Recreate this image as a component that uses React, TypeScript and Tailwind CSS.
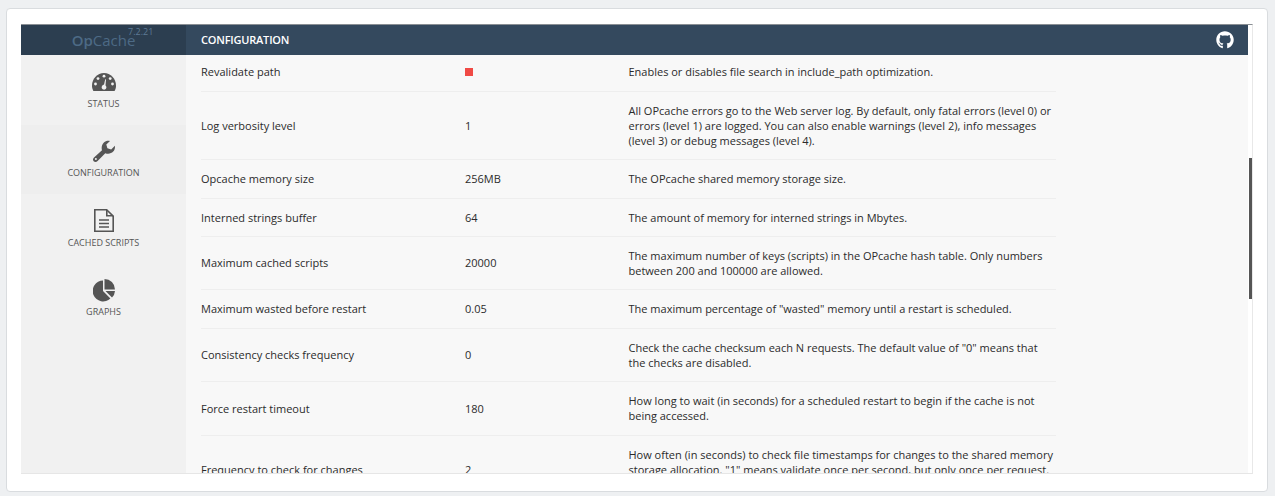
// OpCache GUI, configuration tab, inside a framed scrolling panel.
import type { ReactNode } from 'react';
import { FaGithub } from 'react-icons/fa';

function GaugeIcon() {
  return (
    <svg width="24" height="18" viewBox="0 0 24 18">
      <path
        fill="#555555"
        d="M0 12.5C0 5.6 5.4 0 12 0s12 5.6 12 12.5c0 2-.5 3.9-1.4 5.5H1.4C.5 16.4 0 14.5 0 12.5z"
      />
      <g fill="#f1f1f1">
        <circle cx="12" cy="3.2" r="1.4" />
        <circle cx="6" cy="5.6" r="1.4" />
        <circle cx="18.2" cy="5.6" r="1.4" />
        <circle cx="3.5" cy="11" r="1.4" />
        <circle cx="20.5" cy="11" r="1.4" />
        <path d="M13.2 6.2 14 6.5 13.5 12.4C14.3 13 14.6 14 14.3 15 13.8 16.3 12.5 17 11.2 16.5 10 16 9.3 14.7 9.8 13.4 10.2 12.3 11.2 11.7 12 11.8z" />
      </g>
    </svg>
  );
}

function WrenchIcon() {
  return (
    <svg width="22" height="22" viewBox="0 0 22 22">
      <path
        fill="#555555"
        d="M9 10.2 1 17.4C-.3 18.6-.3 20.2.7 21.2 1.8 22.3 3.4 22.2 4.6 21L12.3 13.2C15.2 14.3 18.2 13.7 20.2 11.6 21.6 10 22.2 8 21.9 5.8L18.2 9.4 14.4 8.3 13.3 4.6 17 1C14.7.4 12.5 1 10.9 2.6 8.8 4.7 8.2 7.6 9 10.2z"
      />
      <circle cx="2.9" cy="19.1" r="1" fill="#eeeeee" />
    </svg>
  );
}

function FileIcon() {
  return (
    <svg width="20" height="23" viewBox="0 0 20 23">
      <path fill="none" stroke="#555555" strokeWidth="1.6" d="M.8.8H12.6L19.2 7.2V22.2H.8z" />
      <path fill="#555555" d="M12 .8h1.6V6H19v1.6H12z" />
      <path stroke="#555555" strokeWidth="1.5" d="M5 11H15M5 14.5H15M5 18H15" />
    </svg>
  );
}

function PieIcon() {
  return (
    <svg width="22" height="23" viewBox="0 0 22 23">
      <path
        fill="#555555"
        d="M10 1.6A10.4 10.4 0 1 0 17.4 19.4L10 12z M11.5 0A10.5 10.5 0 0 1 22 10.5H11.5z M12.5 12H22A10.5 10.5 0 0 1 19 18.6z"
      />
    </svg>
  );
}

interface NavItem {
  label: string;
  icon: ReactNode;
  active?: boolean;
}

const navItems: NavItem[] = [
  { label: 'STATUS', icon: <GaugeIcon /> },
  { label: 'CONFIGURATION', icon: <WrenchIcon />, active: true },
  { label: 'CACHED SCRIPTS', icon: <FileIcon /> },
  { label: 'GRAPHS', icon: <PieIcon /> },
];

interface ConfigRow {
  name: string;
  value: string | null;
  lines: string[];
}

const rows: ConfigRow[] = [
  { name: 'Revalidate path', value: null, lines: ['Enables or disables file search in include_path optimization.'] },
  {
    name: 'Log verbosity level',
    value: '1',
    lines: [
      'All OPcache errors go to the Web server log. By default, only fatal errors (level 0) or',
      'errors (level 1) are logged. You can also enable warnings (level 2), info messages',
      '(level 3) or debug messages (level 4).',
    ],
  },
  { name: 'Opcache memory size', value: '256MB', lines: ['The OPcache shared memory storage size.'] },
  { name: 'Interned strings buffer', value: '64', lines: ['The amount of memory for interned strings in Mbytes.'] },
  {
    name: 'Maximum cached scripts',
    value: '20000',
    lines: [
      'The maximum number of keys (scripts) in the OPcache hash table. Only numbers',
      'between 200 and 100000 are allowed.',
    ],
  },
  {
    name: 'Maximum wasted before restart',
    value: '0.05',
    lines: ['The maximum percentage of "wasted" memory until a restart is scheduled.'],
  },
  {
    name: 'Consistency checks frequency',
    value: '0',
    lines: [
      'Check the cache checksum each N requests. The default value of "0" means that',
      'the checks are disabled.',
    ],
  },
  {
    name: 'Force restart timeout',
    value: '180',
    lines: [
      'How long to wait (in seconds) for a scheduled restart to begin if the cache is not',
      'being accessed.',
    ],
  },
  {
    name: 'Frequency to check for changes',
    value: '2',
    lines: [
      'How often (in seconds) to check file timestamps for changes to the shared memory',
      'storage allocation. "1" means validate once per second, but only once per request.',
      '"0" means always validate.',
    ],
  },
];

function Row({ row }: { row: ConfigRow }) {
  return (
    <div className="flex items-center border-b border-[#eeeeee] py-[11px]">
      <div className="w-[264px] shrink-0">{row.name}</div>
      <div className="w-[163.5px] shrink-0">
        {row.value ?? <div className="size-2 bg-[#f04a45]" />}
      </div>
      <div className="flex-1 whitespace-nowrap">
        {row.lines.map((line) => (
          <div key={line}>{line}</div>
        ))}
      </div>
    </div>
  );
}

export default function App() {
  return (
    <div className="h-[496px] overflow-hidden bg-[#eef0f2] pl-[6px] pr-[7px] pt-[8px] font-['Open_Sans',sans-serif]">
      <div className="h-[484px] rounded border border-[#d9dcdf] bg-white px-[14px] pt-[15px]">
        <div className="flex h-[450px] w-[1232px] flex-col overflow-hidden border-r border-b border-t border-r-[#e8e8e8] border-b-[#e6e6e6] border-t-[#8a8f94] pr-[4px]">
          <div className="flex h-[30px] shrink-0 items-center text-white">
            <div className="relative h-full w-[165px] shrink-0 bg-[#2c3e50] text-center text-[15px] font-semibold leading-[30px] text-[#4d6a85]">
              Op<span className="font-normal">Cache</span>
              <span className="absolute left-[107px] top-[2px] text-[9px] font-normal leading-[9px] text-[#5e7a94]">
                7.2.21
              </span>
            </div>
            <div className="flex h-full flex-1 items-center justify-between bg-[#34495e] pl-[15px] pr-[14px] text-[11px] font-semibold tracking-[-0.2px]">
              <span>CONFIGURATION</span>
              <FaGithub size={18} />
            </div>
          </div>
          <div className="relative flex min-h-0 flex-1">
            <nav className="w-[165px] shrink-0 bg-[#f1f1f1]">
              {navItems.map(({ label, icon, active }) => (
                <div
                  key={label}
                  className={`flex h-[69.67px] flex-col items-center pt-[15px] text-[9px] leading-[12px] text-[#555555] ${active ? 'bg-[#eeeeee]' : ''}`}
                >
                  <div className="flex h-[23px] items-center justify-center">{icon}</div>
                  <span className="mt-[4.5px]">{label}</span>
                </div>
              ))}
            </nav>
            <main className="min-w-0 flex-1 overflow-hidden bg-[#f8f8f8] pl-[15px] text-[11px] leading-[15.25px] text-[#2b2b2b]">
              <div className="w-[855px]">
                <div className="-mt-[1.7px]">
                  {rows.map((row) => (
                    <Row key={row.name} row={row} />
                  ))}
                </div>
              </div>
            </main>
            <div className="absolute right-[-4px] top-[103px] h-[141px] w-[3px] bg-[#555555]" />
          </div>
        </div>
      </div>
    </div>
  );
}
